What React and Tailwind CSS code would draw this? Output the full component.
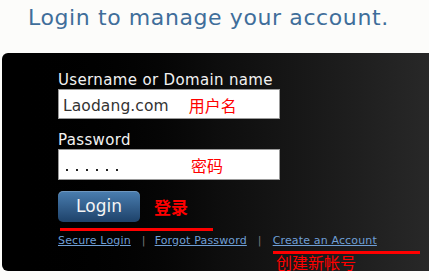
import React from "react";

const sans = { fontFamily: '"DejaVu Sans", Verdana, sans-serif' };
const cjk = { fontFamily: '"Noto Sans CJK SC", sans-serif' };

const Note = ({ children, className }) => (
  <span className={"text-[#ff0000] leading-none " + className} style={cjk}>
    {children}
  </span>
);

export default function App() {
  return (
    <div className="w-[429px] h-[280px] overflow-hidden bg-[#fcfcfa]" style={sans}>
      <h1 className="pl-[28px] pt-[5px] h-[53px] text-[22px] leading-[25px] tracking-[0.6px] text-[#3f6e9a]">
        Login to manage your account.
      </h1>

      <div className="ml-[2px] h-[218px] rounded-l-[6px] bg-gradient-to-r from-[#000] via-[#0d0d0d] to-[#282828] pl-[56px] pt-[18px]">
        <label className="block text-[15px] leading-[18px] tracking-[0.35px] text-[#f2f2f2]">
          Username or Domain name
        </label>
        <div className="flex items-end w-[222px] h-[30px] bg-white border border-[#999] pl-[4px] pb-[2px]">
          <span className="text-[15.5px] leading-[20px] tracking-[0.1px] text-[#333]">Laodang.com</span>
          <Note className="ml-[20px] mb-[3px] text-[16px]">用户名</Note>
        </div>

        <label className="block mt-[12px] text-[15px] leading-[18px] tracking-[0.35px] text-[#f2f2f2]">
          Password
        </label>
        <div className="flex items-center w-[222px] h-[31px] bg-white border border-[#999] pl-[7px]">
          <div className="flex gap-[8px] mt-[10px]">
            {[0, 1, 2, 3, 4, 5].map((i) => (
              <span key={i} className="w-[2px] h-[2px] bg-[#222]" />
            ))}
          </div>
          <Note className="ml-[73px] mt-[1px] text-[16px]">密码</Note>
        </div>

        <div className="flex items-center mt-[11px]">
          <button className="w-[82px] h-[31px] rounded-[5px] bg-gradient-to-b from-[#4b7fb1] to-[#1e426a] text-[17px] text-[#f4f4f4] shadow-[inset_0_1px_0_rgba(255,255,255,0.2)]">
            Login
          </button>
          <Note className="ml-[14px] text-[17px] font-bold">登录</Note>
        </div>

        <div className="ml-[2px] mt-[6px] w-[153px] h-[3px] bg-[#ff0000]" />

        <div className="flex items-center mt-[2px] text-[11px] leading-[16px] tracking-[0.15px]">
          <a className="text-[#6f9fd6] underline">Secure Login</a>
          <span className="ml-[11px] mr-[9px] text-[#777]">|</span>
          <a className="text-[#6f9fd6] underline">Forgot Password</a>
          <span className="ml-[11px] mr-[11px] text-[#777]">|</span>
          <a className="text-[#6f9fd6] underline">Create an Account</a>
        </div>

        <div className="ml-[215px] mt-[2px] w-[147px] h-[3px] bg-[#ff0000]" />
        <Note className="block ml-[218px] text-[16px]">创建新帐号</Note>
      </div>
    </div>
  );
}
